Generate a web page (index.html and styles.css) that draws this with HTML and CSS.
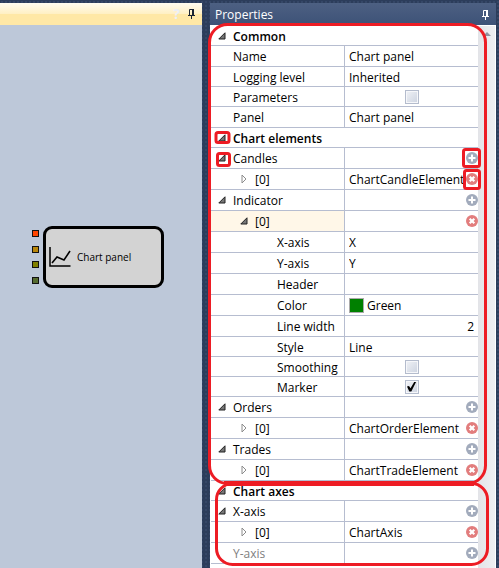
FILE: index.html
```html
<!DOCTYPE html>
<html lang="en">
<head>
<meta charset="utf-8">
<title>Chart panel properties</title>
<link rel="stylesheet" href="styles.css">
</head>
<body>
<svg class="defs" aria-hidden="true">
  <symbol id="open" viewBox="0 0 8 8"><path d="M7 .8V7H.8z" fill="#777" stroke="#222"/></symbol>
  <symbol id="closed" viewBox="0 0 6 10"><path d="M1 1v8l4-4z" fill="#fff" stroke="#8c8c8c"/></symbol>
  <symbol id="plus" viewBox="0 0 12 12"><circle cx="6" cy="6" r="6" fill="#a2abbc"/><path d="M6 2.500v7M2.500 6h7" stroke="#fff" stroke-width="2"/></symbol>
  <symbol id="cross" viewBox="0 0 12 12"><circle cx="6" cy="6" r="6" fill="#e27d7d"/><path d="M3.700 3.700l4.600 4.600M8.300 3.700L3.700 8.300" stroke="#fff" stroke-width="2.200"/></symbol>
  <symbol id="pin" viewBox="0 0 7 10"><path d="M1.500 6V.5h4V6M0 6.500h7M3.500 6v4" fill="none" stroke="currentColor"/><path d="M4 0h2v6H4z" fill="currentColor"/></symbol>
</svg>
<div class="app">
  <main class="designer">
    <header class="tab-bar">
      <button class="icon-button help" aria-label="Help">?</button>
      <button class="icon-button" aria-label="Pin designer"><svg class="pin pin-solid"><use href="#pin"/></svg></button>
    </header>
    <div class="canvas">
      <i class="port port-red"></i><i class="port port-gold"></i><i class="port port-olive"></i><i class="port port-green"></i>
      <div class="node">
        <svg class="chart-icon" viewBox="0 0 22 20" aria-hidden="true"><path d="M1 0v19h20.500" fill="none" stroke="#000" stroke-width="1.500"/><path d="M3 16l5-6 7 3 6-9" fill="none" stroke="#000" stroke-width="1.600"/></svg>
        <span>Chart panel</span>
      </div>
    </div>
  </main>
  <aside class="panel">
    <header class="panel-title">
      <h1>Properties</h1>
      <button class="icon-button" aria-label="Pin properties"><svg class="pin"><use href="#pin"/></svg></button>
    </header>
    <div class="panel-body">
      <div class="grid">
        <div class="row section"><button class="toggle" aria-label="Collapse Common"><svg class="open"><use href="#open"/></svg></button><h2>Common</h2></div>
        <div class="row"><div class="key"><label for="name">Name</label></div><div class="value"><input id="name" type="text" value="Chart panel"></div></div>
        <div class="row short"><div class="key"><label for="log">Logging level</label></div><div class="value"><select id="log"><option>Inherited</option></select></div></div>
        <div class="row short"><div class="key"><label for="params">Parameters</label></div><div class="value check"><input id="params" type="checkbox"></div></div>
        <div class="row"><div class="key"><label for="panel">Panel</label></div><div class="value"><input id="panel" type="text" value="Chart panel"></div></div>

        <div class="row section"><button class="toggle" aria-label="Collapse Chart elements"><svg class="open"><use href="#open"/></svg></button><h2>Chart elements</h2></div>
        <div class="row"><div class="key"><button class="toggle" aria-label="Collapse Candles"><svg class="open"><use href="#open"/></svg></button>Candles</div><div class="value"><button class="action" aria-label="Add candles"><svg><use href="#plus"/></svg></button></div></div>
        <div class="row"><div class="key item"><button class="toggle" aria-label="Expand candles 0"><svg class="closed"><use href="#closed"/></svg></button>[0]</div><div class="value">ChartCandleElement<button class="action" aria-label="Remove candles 0"><svg><use href="#cross"/></svg></button></div></div>
        <div class="row"><div class="key"><button class="toggle" aria-label="Collapse Indicator"><svg class="open"><use href="#open"/></svg></button>Indicator</div><div class="value"><button class="action" aria-label="Add indicator"><svg><use href="#plus"/></svg></button></div></div>
        <div class="row"><div class="key item selected"><button class="toggle" aria-label="Collapse indicator 0"><svg class="open"><use href="#open"/></svg></button>[0]</div><div class="value"><button class="action" aria-label="Remove indicator 0"><svg><use href="#cross"/></svg></button></div></div>
        <div class="row"><div class="key leaf"><label for="x">X-axis</label></div><div class="value"><input id="x" type="text" value="X"></div></div>
        <div class="row"><div class="key leaf"><label for="y">Y-axis</label></div><div class="value"><input id="y" type="text" value="Y"></div></div>
        <div class="row"><div class="key leaf"><label for="header">Header</label></div><div class="value"><input id="header" type="text"></div></div>
        <div class="row"><div class="key leaf"><label for="color">Color</label></div><div class="value"><i class="swatch"></i><select id="color"><option>Green</option></select></div></div>
        <div class="row"><div class="key leaf"><label for="width">Line width</label></div><div class="value number"><input id="width" type="text" value="2"></div></div>
        <div class="row short"><div class="key leaf"><label for="style">Style</label></div><div class="value"><select id="style"><option>Line</option></select></div></div>
        <div class="row short"><div class="key leaf"><label for="smooth">Smoothing</label></div><div class="value check"><input id="smooth" type="checkbox"></div></div>
        <div class="row short"><div class="key leaf"><label for="marker">Marker</label></div><div class="value check"><input id="marker" type="checkbox" checked></div></div>
        <div class="row"><div class="key"><button class="toggle" aria-label="Collapse Orders"><svg class="open"><use href="#open"/></svg></button>Orders</div><div class="value"><button class="action" aria-label="Add orders"><svg><use href="#plus"/></svg></button></div></div>
        <div class="row"><div class="key item"><button class="toggle" aria-label="Expand orders 0"><svg class="closed"><use href="#closed"/></svg></button>[0]</div><div class="value">ChartOrderElement<button class="action" aria-label="Remove orders 0"><svg><use href="#cross"/></svg></button></div></div>
        <div class="row"><div class="key"><button class="toggle" aria-label="Collapse Trades"><svg class="open"><use href="#open"/></svg></button>Trades</div><div class="value"><button class="action" aria-label="Add trades"><svg><use href="#plus"/></svg></button></div></div>
        <div class="row"><div class="key item"><button class="toggle" aria-label="Expand trades 0"><svg class="closed"><use href="#closed"/></svg></button>[0]</div><div class="value">ChartTradeElement<button class="action" aria-label="Remove trades 0"><svg><use href="#cross"/></svg></button></div></div>

        <div class="row section"><button class="toggle" aria-label="Collapse Chart axes"><svg class="open"><use href="#open"/></svg></button><h2>Chart axes</h2></div>
        <div class="row"><div class="key"><button class="toggle" aria-label="Collapse X-axis"><svg class="open"><use href="#open"/></svg></button>X-axis</div><div class="value"><button class="action" aria-label="Add X-axis"><svg><use href="#plus"/></svg></button></div></div>
        <div class="row"><div class="key item"><button class="toggle" aria-label="Expand X-axis 0"><svg class="closed"><use href="#closed"/></svg></button>[0]</div><div class="value">ChartAxis<button class="action" aria-label="Remove X-axis 0"><svg><use href="#cross"/></svg></button></div></div>
        <div class="row"><div class="key muted">Y-axis</div><div class="value"><button class="action" aria-label="Add Y-axis"><svg><use href="#plus"/></svg></button></div></div>
      </div>
      <div class="scrollbar"><i class="arrow"></i></div>
    </div>
    <svg class="marks" width="289" height="568" viewBox="0 0 289 568" fill="none" stroke="#ed1c24" stroke-width="3" aria-hidden="true">
      <rect x="-.5" y="24.500" width="276" height="459" rx="18"/>
      <rect x="6.500" y="483.500" width="271" height="81" rx="16"/>
      <path d="M14 483.500h250" stroke-width="5"/>
      <rect x="6" y="132.500" width="13" height="10" rx="2"/>
      <rect x="7.500" y="153.500" width="12" height="12" rx="2"/>
      <rect x="253.500" y="149.500" width="16" height="17" rx="2"/>
      <rect x="254.500" y="170.500" width="15" height="18" rx="2"/>
    </svg>
  </aside>
</div>
</body>
</html>
```
FILE: styles.css
```css
* { box-sizing: border-box; }
body {
  margin: 0;
  font: 12px/18px "Open Sans", "Noto Sans", sans-serif;
  color: #000;
}
.defs { display: none; }
.app {
  display: flex;
  gap: 8px;
  min-height: 100vh;
  padding: 3px 3px 0 0;
  background-color: #2c3d5b;
  background-image: radial-gradient(#354767 1px, transparent 1px);
  background-size: 4px 4px;
}
button {
  padding: 0;
  border: 0;
  background: none;
  font: inherit;
  color: inherit;
}
button svg { display: block; }

.designer { flex: 1; min-width: 0; display: flex; flex-direction: column; }
.tab-bar {
  display: flex;
  align-items: center;
  justify-content: flex-end;
  gap: 8px;
  height: 22px;
  padding-right: 7px;
  background: linear-gradient(#fffcf0, #fff0c4 49%, #ffe8a6 50%, #ffe8a6);
}
.help { color: #eceff6; font-size: 14px; font-weight: bold; }
.pin { width: 7px; height: 10px; }
.pin-solid { color: #1a2433; }
.canvas { position: relative; flex: 1; background: #bdc8d9; }
.node {
  position: absolute;
  left: 43px;
  top: 201px;
  display: flex;
  align-items: center;
  gap: 6px;
  width: 121px;
  height: 62px;
  padding-left: 3px;
  border: 3px solid #000;
  border-radius: 9px;
  background: #d3d3d3;
  font-size: 10px;
}
.chart-icon { width: 22px; height: 20px; }
.port {
  position: absolute;
  left: 32px;
  width: 7px;
  height: 7px;
  border: 1px solid #111;
}
.port-red { top: 205px; background: #ff4500; }
.port-gold { top: 221px; background: #b8860b; }
.port-olive { top: 236px; background: #808000; }
.port-green { top: 252px; background: #556b2f; }

.panel { position: relative; width: 286px; display: flex; flex-direction: column; }
.panel-title {
  display: flex;
  align-items: center;
  justify-content: space-between;
  height: 22px;
  padding: 2px 7px 0 5px;
  background: linear-gradient(#4d6082, #3d5277);
  color: #fff;
}
h1, h2 { margin: 0; font-size: 12px; line-height: inherit; }
h1 { font-weight: normal; }
h2 { font-weight: 600; }
.panel-body { flex: 1; display: flex; padding: 1px 1px 0; background: #fff; }
.grid { flex: 1; min-width: 0; }
.row { display: flex; height: 21px; border-bottom: 1px solid #b6bdd0; }
.row.short, .row.section { height: 20px; line-height: 16px; }
.section { align-items: flex-end; }
.key {
  display: flex;
  align-items: flex-end;
  width: 134px;
  padding-left: 22px;
  border-right: 1px solid #b6bdd0;
}
.toggle { display: flex; align-self: center; justify-content: center; width: 22px; }
.key .toggle { margin-left: -22px; }
.key.item { padding-left: 44px; }
.key.leaf { padding-left: 66px; }
.selected { background: #fff7e8; }
.muted { color: #808080; }
.open { width: 8px; height: 8px; }
.closed { width: 6px; height: 10px; }
.value { flex: 1; min-width: 0; display: flex; align-items: flex-end; padding-left: 4px; }
.value input[type="text"], .value select {
  width: 100%;
  min-width: 0;
  height: 18px;
  margin: 0;
  padding: 0;
  border: 0;
  background: none;
  font: inherit;
  color: inherit;
  text-align: inherit;
  appearance: none;
}
.short .value select { height: 16px; }
.number { padding-right: 4px; text-align: right; }
.value.check { align-items: center; justify-content: center; padding: 0; }
input[type="checkbox"] {
  appearance: none;
  display: grid;
  place-items: center;
  width: 14px;
  height: 14px;
  margin: 0;
  border: 1px solid #b4bccd;
  background: linear-gradient(135deg, #f0f2f6, #ccd3e0);
  box-shadow: inset 0 0 0 1px #f6f7fa;
}
input[type="checkbox"]:checked::after {
  content: "";
  width: 10px;
  height: 10px;
  background: #000;
  clip-path: polygon(5% 50%, 25% 45%, 40% 68%, 80% 0, 98% 0, 48% 100%, 28% 100%);
}
.swatch { flex: none; align-self: center; width: 15px; height: 15px; margin-right: 3px; border: 1px solid #aaa; background: #008000; }
.action { align-self: center; margin-left: auto; }
.action svg { width: 12px; height: 12px; }
.scrollbar { width: 17px; padding-top: 6px; background: linear-gradient(90deg, #e3e4e8, #eeeff2); }
.arrow {
  display: block;
  width: 0;
  margin: 0 auto;
  border: 4px solid transparent;
  border-top: 0;
  border-bottom-color: #8d93a0;
}
.marks { position: absolute; left: 0; top: -3px; overflow: visible; }
```
